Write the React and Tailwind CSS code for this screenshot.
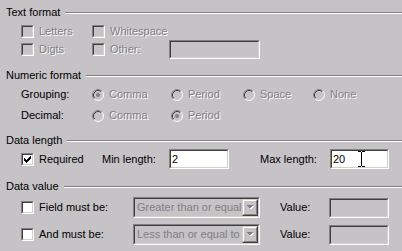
import React from 'react';

const BG = 'bg-[#c5c3c6]';

const Check = ({ checked, disabled }) => (
  <span className="flex w-[13px] h-[13px] shrink-0 border border-t-[#808080] border-l-[#808080] border-b-white border-r-white">
    <span
      className={`flex flex-1 items-center justify-center border border-t-[#404040] border-l-[#404040] border-b-[#d4d0c8] border-r-[#d4d0c8] ${
        disabled ? 'bg-[#c5c3c6]' : 'bg-white'
      }`}
    >
      {checked && (
        <svg width="7" height="7" viewBox="0 0 7 7" shapeRendering="crispEdges">
          <path
            d="M0 2h1v3H0zM1 3h1v3H1zM2 4h1v3H2zM3 3h1v3H3zM4 2h1v3H4zM5 1h1v3H5zM6 0h1v3H6z"
            fill="#000"
          />
        </svg>
      )}
    </span>
  </span>
);

const Radio = ({ selected }) => (
  <svg width="12" height="12" viewBox="0 0 12 12" className="shrink-0">
    <circle cx="6" cy="6" r="4" fill="#c5c3c6" />
    <path d="M2.11 9.89 A5.5 5.5 0 0 1 9.89 2.11" fill="none" stroke="#808080" />
    <path d="M9.89 2.11 A5.5 5.5 0 0 1 2.11 9.89" fill="none" stroke="#ffffff" />
    <path d="M2.82 9.18 A4.5 4.5 0 0 1 9.18 2.82" fill="none" stroke="#404040" />
    <path d="M9.18 2.82 A4.5 4.5 0 0 1 2.82 9.18" fill="none" stroke="#d4d0c8" />
    {selected && <circle cx="6" cy="6" r="2" fill="#808080" />}
  </svg>
);

const Sunken = ({ className, white, children }) => (
  <div className={`flex border border-t-[#808080] border-l-[#808080] border-b-white border-r-white ${className}`}>
    <div
      className={`relative flex flex-1 items-center min-w-0 border border-t-[#404040] border-l-[#404040] border-b-[#d4d0c8] border-r-[#d4d0c8] ${
        white ? 'bg-white' : 'bg-[#c5c3c6]'
      }`}
    >
      {children}
    </div>
  </div>
);

const Dim = ({ children, className = '' }) => (
  <span className={`text-[#808080] [text-shadow:1px_1px_0_#ffffff] ${className}`}>{children}</span>
);

const Header = ({ title, className = '' }) => (
  <div className={`flex items-center pl-[6px] ${className}`}>
    <span className="leading-[13px] pr-[5px]">{title}</span>
    <div className="flex-1 h-[2px] border-t border-t-[#808080] border-b border-b-white" />
  </div>
);

const Select = ({ text }) => (
  <Sunken className="w-[127px] h-[21px]">
    <span className="flex-1 pl-[2px] text-[#808080] whitespace-nowrap overflow-hidden">{text}</span>
    <div className="flex w-[16px] h-[17px] shrink-0 border border-t-[#d4d0c8] border-l-[#d4d0c8] border-b-[#404040] border-r-[#404040]">
      <div className="flex flex-1 items-center justify-center border border-t-white border-l-white border-b-[#808080] border-r-[#808080] bg-[#c5c3c6]">
        <svg width="8" height="5" viewBox="0 0 8 5" shapeRendering="crispEdges">
          <path d="M1 1h7L4.5 4.5z" fill="#ffffff" />
          <path d="M0 0h7L3.5 3.5z" fill="#808080" />
        </svg>
      </div>
    </div>
  </Sunken>
);

export default function App() {
  return (
    <div
      className={`w-[402px] h-[251px] overflow-hidden ${BG} text-black text-[11px] leading-[13px] pt-[6px]`}
      style={{ fontFamily: '"Liberation Sans", Arial, sans-serif' }}
    >
      {/* Text format */}
      <Header title="Text format" />
      <div className="flex items-center h-[13px] mt-[6px] pl-[21px]">
        <div className="flex items-center gap-[5px] w-[71px]">
          <Check disabled />
          <Dim>Letters</Dim>
        </div>
        <div className="flex items-center gap-[5px]">
          <Check disabled />
          <Dim>Whitespace</Dim>
        </div>
      </div>
      <div className="flex items-center h-[19px] mt-[2px] pl-[21px]">
        <div className="flex items-center gap-[5px] w-[71px]">
          <Check disabled />
          <Dim>Digts</Dim>
        </div>
        <div className="flex items-center gap-[5px] w-[77px]">
          <Check disabled />
          <Dim>Other:</Dim>
        </div>
        <Sunken className="w-[91px] h-[19px]" />
      </div>

      {/* Numeric format */}
      <Header title="Numeric format" className="mt-[10px]" />
      {[
        ['Grouping:', 0],
        ['Decimal:', 1],
      ].map(([label, sel], i) => (
        <div key={label} className={`flex items-center h-[13px] pl-[21px] ${i === 0 ? 'mt-[6px]' : 'mt-[8px]'}`}>
          <span className="w-[71px]">{label}</span>
          <div className="flex items-center gap-[5px] w-[79px]">
            <Radio selected={sel === 0} />
            <Dim>Comma</Dim>
          </div>
          <div className="flex items-center gap-[5px] w-[72px]">
            <Radio selected={sel === 1} />
            <Dim>Period</Dim>
          </div>
          {i === 0 && (
            <>
              <div className="flex items-center gap-[5px] w-[70px]">
                <Radio />
                <Dim>Space</Dim>
              </div>
              <div className="flex items-center gap-[5px]">
                <Radio />
                <Dim>None</Dim>
              </div>
            </>
          )}
        </div>
      ))}

      {/* Data length */}
      <Header title="Data length" className="mt-[12px]" />
      <div className="flex items-center h-[20px] mt-[2px] pl-[21px]">
        <div className="flex items-center gap-[5px] w-[81px]">
          <Check checked />
          <span>Required</span>
        </div>
        <span className="w-[67px]">Min length:</span>
        <Sunken className="w-[60px] h-[20px]" white>
          <span className="pl-[1px]">2</span>
        </Sunken>
        <span className="w-[70px] ml-[31px]">Max length:</span>
        <Sunken className="w-[59px] h-[20px]" white>
          <span className="pl-[1px]">20</span>
          {/* I-beam mouse cursor */}
          <svg className="absolute left-[26px] top-[0px]" width="7" height="16" viewBox="0 0 7 16" shapeRendering="crispEdges">
            <path d="M0 0h3v1H0zM4 0h3v1H4zM3 1h1v14H3zM0 15h3v1H0zM4 15h3v1H4z" fill="#000" />
          </svg>
        </Sunken>
      </div>

      {/* Data value */}
      <Header title="Data value" className="mt-[11px]" />
      {[
        ['Field must be:', 'Greater than or equal'],
        ['And must be:', 'Less than or equal to'],
      ].map(([label, text], i) => (
        <div key={label} className={`flex items-center h-[21px] pl-[21px] ${i === 0 ? 'mt-[4px]' : 'mt-[6px]'}`}>
          <div className="flex items-center gap-[5px] w-[112px]">
            <Check />
            <span>{label}</span>
          </div>
          <Select text={text} />
          <span className="w-[49px] ml-[20px]">Value:</span>
          <Sunken className="w-[60px] h-[20px]" />
        </div>
      ))}
    </div>
  );
}
